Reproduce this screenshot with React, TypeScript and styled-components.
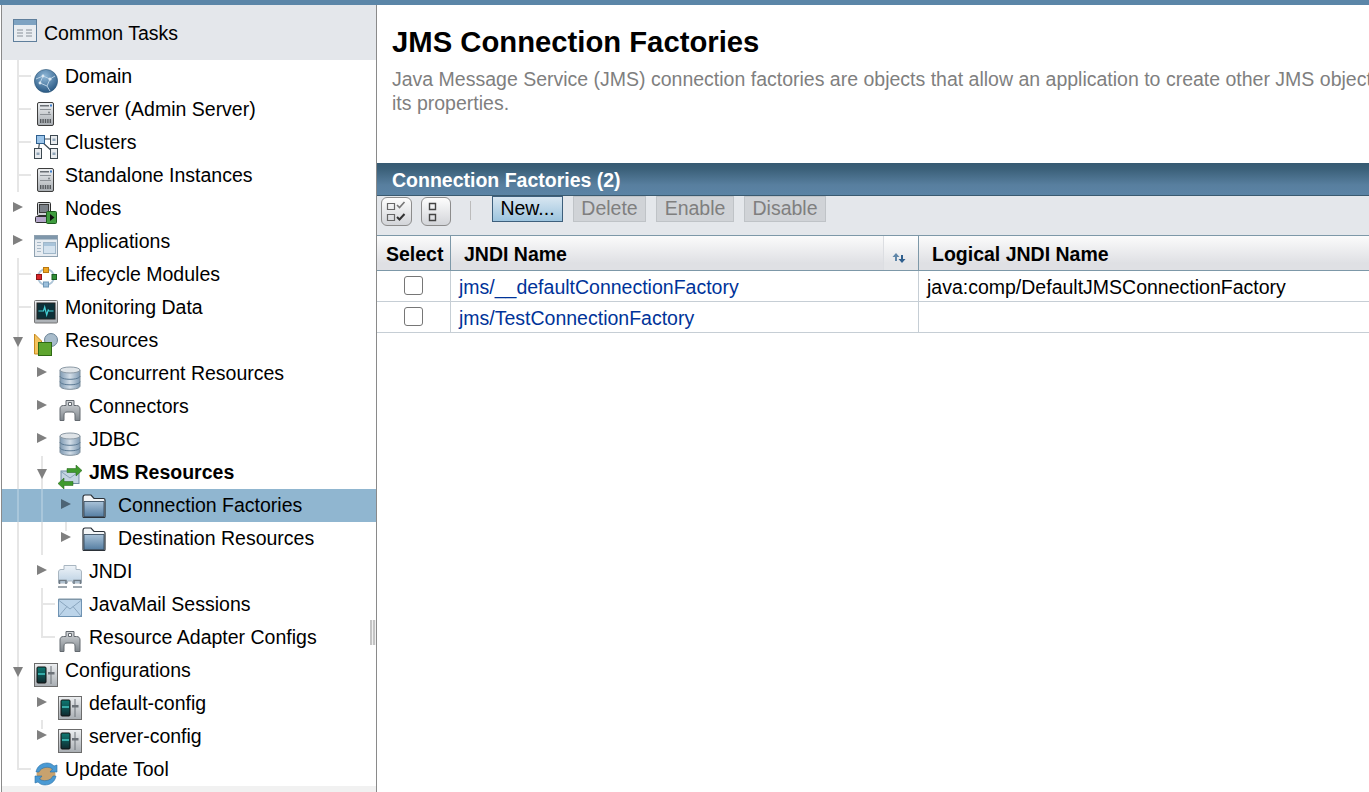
import { ReactNode } from 'react'
import styled, { createGlobalStyle } from 'styled-components'

const GlobalStyle = createGlobalStyle`
	html, body {
		margin: 0;
		padding: 0;
		background: #fff;
		overflow: hidden;
	}
	body {
		font-family: "Liberation Sans", Arial, sans-serif;
		color: #000;
	}
`

const Page = styled.div`
	width: 1369px;
	height: 792px;
	overflow: hidden;
	display: flex;
	flex-direction: column;
`
const TopBar = styled.div`
	height: 5px;
	flex: none;
	background: #5b86a8;
`
const Body = styled.div`
	flex: 1;
	min-height: 0;
	display: flex;
`

const Sidebar = styled.aside`
	position: relative;
	width: 376px;
	flex: none;
	margin-left: 1px;
	box-sizing: border-box;
	border-left: 1px solid #8a8a8a;
	border-right: 1px solid #8a8a8a;
	display: flex;
	flex-direction: column;
	background: #fff;
`
const TasksHeader = styled.div`
	height: 55px;
	flex: none;
	box-sizing: border-box;
	padding: 1px 0 0 11px;
	display: flex;
	align-items: center;
	gap: 7px;
	background: #e4e7eb;
	font-size: 19.5px;
	svg {
		margin-top: -4px;
	}
`
const TreeList = styled.div`
	flex: 1;
`
const SidebarFooter = styled.div`
	height: 6px;
	flex: none;
	background: #f1f1f1;
`
const Grip = styled.div`
	position: absolute;
	left: 368px;
	top: 615px;
	width: 6px;
	height: 25px;
	background: linear-gradient(
		to right,
		#c4c4c4 0 2px,
		#f1f1f1 2px 3px,
		#c4c4c4 3px 5px,
		#f1f1f1 5px 6px
	);
`

const TreeRow = styled.div<{ $selected?: boolean; $lift?: number }>`
	height: 33px;
	display: flex;
	padding-left: 4px;
	background: ${p => (p.$selected ? '#90b6d0' : 'transparent')};
	svg {
		flex: none;
		align-self: flex-end;
		margin-bottom: ${p => p.$lift || 0}px;
	}
`

type GuideKind = 'pipe' | 'tee' | 'elbow' | 'closed' | 'stub' | 'open'

const guideBackground = (kind: GuideKind, line: string) => {
	const paint = `linear-gradient(${line}, ${line})`
	if (kind === 'pipe' || kind === 'open') return `${paint} 11px 0 / 2px 100% no-repeat`
	if (kind === 'tee')
		return `${paint} 11px 0 / 2px 100% no-repeat, ${paint} 13px 15px / 12px 2px no-repeat`
	if (kind === 'elbow')
		return `${paint} 11px 0 / 2px 17px no-repeat, ${paint} 13px 15px / 12px 2px no-repeat`
	if (kind === 'stub') return `${paint} 11px 0 / 2px 9px no-repeat`
	return 'none'
}

const Guide = styled.div<{ $kind: GuideKind; $last: boolean; $selected?: boolean }>`
	flex: none;
	width: ${p => (p.$last ? 28 : 24)}px;
	display: flex;
	align-items: center;
	background: ${p => guideBackground(p.$kind, p.$selected ? '#a9c7db' : '#e6e6e6')};
`
const ArrowClosed = styled.span<{ $selected?: boolean }>`
	margin: -3px 0 0 7px;
	border-style: solid;
	border-width: 5px 0 5px 10px;
	border-color: transparent transparent transparent ${p => (p.$selected ? '#4d6475' : '#808080')};
`
const ArrowOpen = styled.span`
	margin: 3px 0 0 7px;
	border-style: solid;
	border-width: 10px 5px 0 5px;
	border-color: #808080 transparent transparent transparent;
`
const TreeLabel = styled.span<{ $gap: number; $bold?: boolean }>`
	margin-left: ${p => p.$gap}px;
	line-height: 33px;
	font-size: 19.5px;
	white-space: nowrap;
	font-weight: ${p => (p.$bold ? 700 : 400)};
`

const Main = styled.main`
	flex: 1;
	min-width: 0;
	display: flex;
	flex-direction: column;
`
const PageHead = styled.header`
	padding: 21px 0 0 15px;
	height: 158px;
	box-sizing: border-box;
	flex: none;
`
const Title = styled.h1`
	margin: 0;
	font-size: 29.25px;
	line-height: 32px;
	font-weight: 700;
`
const Help = styled.p`
	margin: 9px 0 0;
	font-size: 19.5px;
	line-height: 24px;
	color: #7f7f7f;
	white-space: nowrap;
`
const TableTitle = styled.div`
	height: 33px;
	flex: none;
	box-sizing: border-box;
	padding: 1px 0 0 15px;
	border-bottom: 1px solid #3a5a70;
	background: linear-gradient(to bottom, #365a72 0, #3b6079 6px, #587f9f 22px, #5b84a5 100%);
	color: #fff;
	font-size: 19.5px;
	font-weight: 700;
	line-height: 32px;
`
const Toolbar = styled.div`
	height: 39px;
	flex: none;
	box-sizing: border-box;
	display: flex;
	align-items: flex-start;
	padding-left: 4px;
	background: #e4e7eb;
`
const IconButton = styled.button<{ $width: number; $gap?: number }>`
	width: ${p => p.$width}px;
	height: 29px;
	margin: 1px 0 0 ${p => p.$gap || 0}px;
	padding: 0;
	display: flex;
	align-items: center;
	box-sizing: border-box;
	border: 1px solid #8c8c8c;
	border-radius: 6px;
	background: linear-gradient(to bottom, #fdfdfd, #d3d5d9);
`
const ToolSeparator = styled.div`
	width: 1px;
	height: 19px;
	margin: 5px 21px 0 19px;
	background: #bcbcbc;
`
const ActionButton = styled.button<{ $primary?: boolean; $width: number }>`
	width: ${p => p.$width}px;
	height: 26px;
	margin-right: 10px;
	padding: 0 0 2px;
	box-sizing: border-box;
	font: 19.5px "Liberation Sans", Arial, sans-serif;
	border: 1px solid ${p => (p.$primary ? '#3d5f7c' : '#bfc3c7')};
	color: ${p => (p.$primary ? '#000' : '#7f7f7f')};
	background: ${p =>
		p.$primary ? 'linear-gradient(to bottom, #d8e6f1, #9cc4de)' : '#d0d3d7'};
`

const columns = '74px 468px 1fr'

const HeadRow = styled.div`
	display: grid;
	grid-template-columns: ${columns};
	height: 36px;
	flex: none;
	box-sizing: border-box;
	border-top: 1px solid #7d98a8;
	border-bottom: 1px solid #7d98a8;
	background: linear-gradient(to bottom, #fbfbfb, #dfe0e4 80%);
	font-size: 19.5px;
	font-weight: 700;
`
const HeadCell = styled.div<{ $pad: number }>`
	display: flex;
	align-items: center;
	padding: 2px 0 0 ${p => p.$pad}px;
	border-right: 1px solid #7d98a8;
	&:last-child {
		border-right: none;
	}
`
const HeadLabel = styled.span`
	flex: 1;
`
const SortCell = styled.div`
	width: 35px;
	align-self: stretch;
	box-sizing: border-box;
	margin-top: -2px;
	display: flex;
	align-items: flex-end;
	justify-content: center;
	padding: 0 4px 6px 0;
	border-left: 1px solid #dcdee2;
	background: linear-gradient(to bottom, #fff, #e4e5e8 80%);
`
const DataRow = styled.div`
	display: grid;
	grid-template-columns: ${columns};
	height: 31px;
	flex: none;
	box-sizing: border-box;
	border-bottom: 1px solid #c6ced5;
	font-size: 19.5px;
`
const DataCell = styled.div<{ $center?: boolean }>`
	display: flex;
	align-items: center;
	justify-content: ${p => (p.$center ? 'center' : 'flex-start')};
	padding: ${p => (p.$center ? '0' : '3px 0 0 8px')};
	border-right: 1px solid #c6ced5;
	&:last-child {
		border-right: none;
	}
`
const SelectBox = styled.input`
	appearance: none;
	width: 19px;
	height: 19px;
	margin: 0 0 1px;
	box-sizing: border-box;
	border: 1px solid #767676;
	border-radius: 3px;
	background: #fff;
`
const NameLink = styled.a`
	color: #003399;
	text-decoration: none;
`

const Icon = ({ children }: { children: ReactNode }) => (
	<svg width='24' height='24' viewBox='0 0 24 24'>
		{children}
	</svg>
)

const SharedDefs = () => (
	<svg width='0' height='0' style={{ position: 'absolute' }}>
		<defs>
			<radialGradient id='globe' cx='45%' cy='30%' r='75%'>
				<stop offset='0' stopColor='#8fb8d8' />
				<stop offset='1' stopColor='#22527e' />
			</radialGradient>
			<linearGradient id='steel' x1='0' y1='0' x2='0' y2='1'>
				<stop offset='0' stopColor='#eef0f2' />
				<stop offset='1' stopColor='#a8adb2' />
			</linearGradient>
			<linearGradient id='sky' x1='0' y1='0' x2='0' y2='1'>
				<stop offset='0' stopColor='#eef3f8' />
				<stop offset='1' stopColor='#bcd1e3' />
			</linearGradient>
			<linearGradient id='folder' x1='0' y1='0' x2='0' y2='1'>
				<stop offset='0' stopColor='#a9c2d8' />
				<stop offset='1' stopColor='#577fa3' />
			</linearGradient>
			<linearGradient id='db' x1='0' y1='0' x2='1' y2='0'>
				<stop offset='0' stopColor='#7f9ab3' />
				<stop offset='.5' stopColor='#d3dee8' />
				<stop offset='1' stopColor='#7f9ab3' />
			</linearGradient>
			<linearGradient id='plug' x1='0' y1='0' x2='0' y2='1'>
				<stop offset='0' stopColor='#d6d9dc' />
				<stop offset='1' stopColor='#7f868c' />
			</linearGradient>
			<linearGradient id='rack' x1='0' y1='0' x2='0' y2='1'>
				<stop offset='0' stopColor='#0d7a74' />
				<stop offset='1' stopColor='#10292e' />
			</linearGradient>
		</defs>
	</svg>
)

const TasksIcon = () => (
	<svg width='24' height='24' viewBox='0 0 24 24'>
		<rect x='.5' y='.5' width='23' height='22' fill='#e9edf1' stroke='#5f7f9c' />
		<rect x='1' y='1' width='22' height='5' fill='#7ea3c2' />
		<path d='M4 10h6v2H4zM13 10h6v2h-6zM4 13h6v2H4zM13 13h6v2h-6zM4 16h6v2H4zM13 16h6v2h-6z' fill='#b9bfc5' />
	</svg>
)
const GlobeIcon = () => (
	<Icon>
		<circle cx='12' cy='12' r='11.6' fill='url(#globe)' stroke='#2d5879' strokeWidth='.6' />
		<path d='M2 10l7-3 7 3 5-3M9 7l-3 7 7 3 3-7M13 17l3 5' fill='none' stroke='#b7d0e4' strokeWidth='1' />
		<circle cx='16' cy='10' r='1.6' fill='#dbe8f2' />
		<circle cx='9' cy='7' r='1.4' fill='#dbe8f2' />
		<circle cx='6' cy='14' r='1.4' fill='#dbe8f2' />
	</Icon>
)
const ServerIcon = () => (
	<Icon>
		<rect x='3.500' y='.5' width='16' height='23' rx='1.500' fill='url(#steel)' stroke='#3d3d3d' />
		<path d='M6 3h9v1.500H6z' fill='#6a6f74' />
		<rect x='16' y='2.500' width='2' height='2' fill='#3c7fd0' />
		<path d='M6 7h11v1H6zM6 12h11v1H6z' fill='#8b9095' />
		<circle cx='15' cy='10.500' r='1' fill='#7d8287' />
		<path d='M6 17h1.400v4H6zM8.400 17h1.400v4H8.400zM10.800 17h1.400v4h-1.400zM13.200 17h1.400v4h-1.400zM15.600 17H17v4h-1.400z' fill='#55595d' />
	</Icon>
)
const ClusterIcon = () => (
	<Icon>
		<path d='M6 4h12M6 4L4 18M7 6l13 12' fill='none' stroke='#3e4a54' strokeWidth='1.200' />
		<rect x='2.500' y='.5' width='8' height='8' fill='#9cc5ea' stroke='#2e5f8e' />
		<rect x='16.500' y='.5' width='7' height='9' fill='#e8ebee' stroke='#3d4850' />
		<rect x='.5' y='13.500' width='7' height='10' fill='#e8ebee' stroke='#3d4850' />
		<rect x='16.500' y='13.500' width='7' height='10' fill='#e8ebee' stroke='#3d4850' />
		<path d='M18.500 3.500h3V6h-3zM2.500 17.500h3V20h-3zM18.500 17.500h3V20h-3z' fill='#8fa5b8' />
	</Icon>
)
const NodesIcon = () => (
	<Icon>
		<rect x='3.500' y='1.500' width='13' height='13' rx='1' fill='#cfd3d6' stroke='#2d2d2d' />
		<rect x='5.500' y='3.500' width='9' height='8' fill='#7b8188' stroke='#3a3a3a' />
		<rect x='1.500' y='15.500' width='15' height='6' rx='1' fill='#b4a6c9' stroke='#2d2d2d' />
		<rect x='12.500' y='10.500' width='10' height='12' rx='1' fill='#3f9c3f' stroke='#1d5c1d' />
		<path d='M16 13l4.500 3.500-4.500 3.500z' fill='#111' />
	</Icon>
)
const AppsIcon = () => (
	<Icon>
		<rect x='.5' y='1.500' width='23' height='21' fill='#e7ecf1' stroke='#8fa1b0' />
		<rect x='1' y='2' width='22' height='3.500' fill='#7f97ab' />
		<path d='M3 8h4v1H3zM3 11h4v1H3zM3 14h4v1H3zM3 17h4v1H3z' fill='#a8b9c7' />
		<rect x='9.500' y='8.500' width='12' height='11' fill='#d4e2ee' stroke='#a0b7c9' />
		<rect x='10' y='9' width='11' height='3' fill='#a9c4da' />
	</Icon>
)
const LifecycleIcon = () => (
	<Icon>
		<circle cx='12' cy='10' r='8' fill='none' stroke='#aec6d8' strokeWidth='2' />
		<rect x='9.500' y='.5' width='5' height='5' fill='#efa623' stroke='#b9770f' />
		<rect x='2.500' y='7.500' width='5' height='5' fill='#d9262a' stroke='#8e1416' />
		<rect x='18' y='7.500' width='4.500' height='5' fill='#2f8f35' stroke='#1b5c20' />
		<rect x='9.500' y='15' width='5' height='5' fill='#9cc0dc' stroke='#6f97b6' />
	</Icon>
)
const MonitorIcon = () => (
	<Icon>
		<rect x='.5' y='.5' width='23' height='22.500' rx='1' fill='url(#steel)' stroke='#777' />
		<rect x='3' y='3' width='18' height='16' fill='#0d3038' stroke='#222' />
		<path d='M4.500 11h5l1.200-4 2 8 1.500-5 .8 1h4.500' fill='none' stroke='#45d2d8' strokeWidth='1.200' />
	</Icon>
)
const ResourcesIcon = () => (
	<Icon>
		<path d='M.5 1v20h7V8z' fill='#f4c35e' stroke='#c88a1f' />
		<circle cx='17' cy='7' r='6.500' fill='#a8bccb' stroke='#6b8396' />
		<rect x='4.500' y='9.500' width='13' height='13' fill='#5ea52f' stroke='#2f6a14' />
	</Icon>
)
const DatabaseIcon = () => (
	<Icon>
		<path d='M2 4v16c0 2 4.500 3.300 10 3.300S22 22 22 20V4z' fill='url(#db)' stroke='#7d8d9a' />
		<ellipse cx='12' cy='4' rx='10' ry='3' fill='#dfe4e8' stroke='#8b99a5' />
		<path d='M2 10c0 2 4.500 3.300 10 3.300S22 12 22 10M2 15.500c0 2 4.500 3.300 10 3.300s10-1.300 10-3.300' fill='none' stroke='#5c7a94' />
	</Icon>
)
const PlugIcon = () => (
	<Icon>
		<path
			fillRule='evenodd'
			d='M8 1.500h8v5h2.500c2.500 0 3.500 1.500 3.500 3.500v11.500h-5V16c0-2-1-3-3-3h-5c-2 0-3 1-3 3v5.500H2V10c0-2 1-3.500 3.500-3.500H8zM10.500 3.500v3h3v-3z'
			fill='url(#plug)'
			stroke='#646a70'
		/>
	</Icon>
)
const JmsIcon = () => (
	<Icon>
		<rect x='3' y='6' width='18' height='12.500' fill='#c3d4e2' stroke='#6f8ba3' />
		<path d='M3 6.500l9 6.500 9-6.500' fill='none' stroke='#8aa3b8' />
		<path d='M9 3.500h9V0l6 5.500-6 5.500V7.500H9z' fill='#3f9a2e' stroke='#1f5f15' strokeWidth='.5' />
		<path d='M15 16.500H6V13L0 18.500 6 24v-3.500h9z' fill='#3f9a2e' stroke='#1f5f15' strokeWidth='.5' />
	</Icon>
)
const FolderIcon = () => (
	<Icon>
		<path d='M1 3.500C1 2 1.800 1 3 1h6l3 3.500h9.500c.9 0 1.500.7 1.500 1.500v16.500c0 .6-.4 1-1 1H2c-.6 0-1-.4-1-1z' fill='#f4f6f8' stroke='#2b3138' strokeWidth='1.200' />
		<path d='M2 7.500h20v15H2z' fill='url(#folder)' stroke='#2b3f52' strokeWidth='.8' />
	</Icon>
)
const JndiIcon = () => (
	<Icon>
		<path d='M.5 8c0-1.500 1-2.500 2.500-2.500h3V1.500h12v4h3c1.500 0 2.500 1 2.500 2.500v11h-9v-2h-5v2h-9z' fill='url(#sky)' stroke='#a9b6c1' />
		<path d='M1.500 20v-3.500h6.500V20M16 20v-3.500h6.500V20' fill='none' stroke='#6f7a84' strokeWidth='1.500' />
		<path d='M0 23h9M15 23h9' stroke='#7f8a94' strokeWidth='1.500' />
	</Icon>
)
const MailIcon = () => (
	<Icon>
		<rect x='.5' y='2.500' width='23' height='17' fill='#bcd4e9' stroke='#6f93b3' />
		<rect x='.5' y='1.500' width='23' height='1.500' fill='#7f96a8' />
		<path d='M1 3.500l11 8.500 11-8.500M1 19l8-9.500M23 19l-8-9.500' fill='none' stroke='#8aa6bf' />
	</Icon>
)
const ConfigIcon = () => (
	<Icon>
		<rect x='.5' y='.5' width='23' height='23' fill='url(#steel)' stroke='#6c6c6c' />
		<rect x='3' y='4' width='9' height='16' rx='1' fill='url(#rack)' stroke='#111' />
		<path d='M4 11h7' stroke='#45c7c3' strokeWidth='1.500' />
		<path d='M17 3v18' stroke='#6d7278' strokeWidth='1' />
		<rect x='14' y='9' width='6.500' height='2.500' fill='#6d7278' />
	</Icon>
)
const UpdateIcon = () => (
	<Icon>
		<circle cx='12' cy='12' r='9.500' fill='#c8a26e' />
		<path d='M2 10C3 4 8 1 13 1c3 0 5 1 7 3l3-1v7h-7l2.500-3C15 4 7 5 5 10z' fill='#4a9ad4' stroke='#2a6ea5' strokeWidth='.6' />
		<path d='M22 14c-1 6-6 9-11 9-3 0-5-1-7-3l-3 1v-7h7l-2.500 3C9 20 17 19 19 14z' fill='#4a9ad4' stroke='#2a6ea5' strokeWidth='.6' />
	</Icon>
)

interface ITreeItem {
	label: string
	icon: () => ReactNode
	guides: GuideKind[]
	gap?: number
	lift?: number
	bold?: boolean
	selected?: boolean
}

const treeItems: ITreeItem[] = [
	{ label: 'Domain', icon: GlobeIcon, guides: ['tee'] },
	{ label: 'server (Admin Server)', icon: ServerIcon, guides: ['tee'] },
	{ label: 'Clusters', icon: ClusterIcon, guides: ['tee'] },
	{ label: 'Standalone Instances', icon: ServerIcon, guides: ['tee'] },
	{ label: 'Nodes', icon: NodesIcon, guides: ['closed'] },
	{ label: 'Applications', icon: AppsIcon, guides: ['closed'] },
	{ label: 'Lifecycle Modules', icon: LifecycleIcon, guides: ['tee'] },
	{ label: 'Monitoring Data', icon: MonitorIcon, guides: ['tee'] },
	{ label: 'Resources', icon: ResourcesIcon, guides: ['open'] },
	{ label: 'Concurrent Resources', icon: DatabaseIcon, guides: ['pipe', 'closed'] },
	{ label: 'Connectors', icon: PlugIcon, guides: ['pipe', 'closed'] },
	{ label: 'JDBC', icon: DatabaseIcon, guides: ['pipe', 'closed'] },
	{ label: 'JMS Resources', icon: JmsIcon, guides: ['pipe', 'open'], bold: true },
	{ label: 'Connection Factories', icon: FolderIcon, guides: ['pipe', 'pipe', 'closed'], gap: 12, lift: 4, selected: true },
	{ label: 'Destination Resources', icon: FolderIcon, guides: ['pipe', 'pipe', 'stub'], gap: 12, lift: 4 },
	{ label: 'JNDI', icon: JndiIcon, guides: ['pipe', 'closed'] },
	{ label: 'JavaMail Sessions', icon: MailIcon, guides: ['pipe', 'tee'] },
	{ label: 'Resource Adapter Configs', icon: PlugIcon, guides: ['pipe', 'elbow'] },
	{ label: 'Configurations', icon: ConfigIcon, guides: ['open'] },
	{ label: 'default-config', icon: ConfigIcon, guides: ['pipe', 'closed'] },
	{ label: 'server-config', icon: ConfigIcon, guides: ['pipe', 'stub'] },
	{ label: 'Update Tool', icon: UpdateIcon, guides: ['elbow'] },
]

const factories = [
	{ name: 'jms/__defaultConnectionFactory', logical: 'java:comp/DefaultJMSConnectionFactory' },
	{ name: 'jms/TestConnectionFactory', logical: '' },
]

const App = () => {
	return (
		<Page>
			<GlobalStyle />
			<SharedDefs />
			<TopBar />
			<Body>
				<Sidebar>
					<TasksHeader>
						<TasksIcon />
						Common Tasks
					</TasksHeader>
					<TreeList>
						{treeItems.map(item => (
							<TreeRow key={item.label} $selected={item.selected} $lift={item.lift}>
								{item.guides.map((kind, index) => (
									<Guide
										key={index}
										$kind={kind}
										$last={index === item.guides.length - 1}
										$selected={item.selected}
									>
										{(kind === 'closed' || kind === 'stub') && (
											<ArrowClosed $selected={item.selected} />
										)}
										{kind === 'open' && <ArrowOpen />}
									</Guide>
								))}
								<item.icon />
								<TreeLabel $gap={item.gap || 7} $bold={item.bold}>
									{item.label}
								</TreeLabel>
							</TreeRow>
						))}
					</TreeList>
					<SidebarFooter />
					<Grip />
				</Sidebar>
				<Main>
					<PageHead>
						<Title>JMS Connection Factories</Title>
						<Help>
							Java Message Service (JMS) connection factories are objects that allow an
							application to create other JMS objects.
							<br />
							its properties.
						</Help>
					</PageHead>
					<TableTitle>Connection Factories (2)</TableTitle>
					<Toolbar>
						<IconButton $width={31}>
							<svg width='26' height='26' viewBox='0 0 26 26'>
								<path d='M5.500 4.500h7v6h-7zM5.500 15.500h7v6h-7z' fill='none' stroke='#666' strokeWidth='1.200' />
								<path d='M15 6l2.500 2.500 5-5.500' fill='none' stroke='#777' strokeWidth='1.600' />
								<path d='M15 18l2.500 2.500 5-5.500' fill='none' stroke='#333' strokeWidth='2' />
							</svg>
						</IconButton>
						<IconButton $width={30} $gap={9}>
							<svg width='20' height='26' viewBox='0 0 20 26'>
								<path d='M7.500 4.500h6v6h-6zM7.500 15.500h6v6h-6z' fill='none' stroke='#444' strokeWidth='1.400' />
							</svg>
						</IconButton>
						<ToolSeparator />
						<ActionButton $primary $width={71}>New...</ActionButton>
						<ActionButton $width={73}>Delete</ActionButton>
						<ActionButton $width={78}>Enable</ActionButton>
						<ActionButton $width={82}>Disable</ActionButton>
					</Toolbar>
					<HeadRow>
						<HeadCell $pad={9}>Select</HeadCell>
						<HeadCell $pad={13}>
							<HeadLabel>JNDI Name</HeadLabel>
							<SortCell>
								<svg width='14' height='12' viewBox='0 0 14 12'>
									<path d='M4 1l3.500 4H5v4H3V5H.5z' fill='#5f86a8' />
									<path d='M10 11l3.500-4H11V3H9v4H6.500z' fill='#2f5f8e' />
								</svg>
							</SortCell>
						</HeadCell>
						<HeadCell $pad={13}>Logical JNDI Name</HeadCell>
					</HeadRow>
					{factories.map(row => (
						<DataRow key={row.name}>
							<DataCell $center>
								<SelectBox type='checkbox' />
							</DataCell>
							<DataCell>
								<NameLink href='#'>{row.name}</NameLink>
							</DataCell>
							<DataCell>{row.logical}</DataCell>
						</DataRow>
					))}
				</Main>
			</Body>
		</Page>
	)
}

export default App
